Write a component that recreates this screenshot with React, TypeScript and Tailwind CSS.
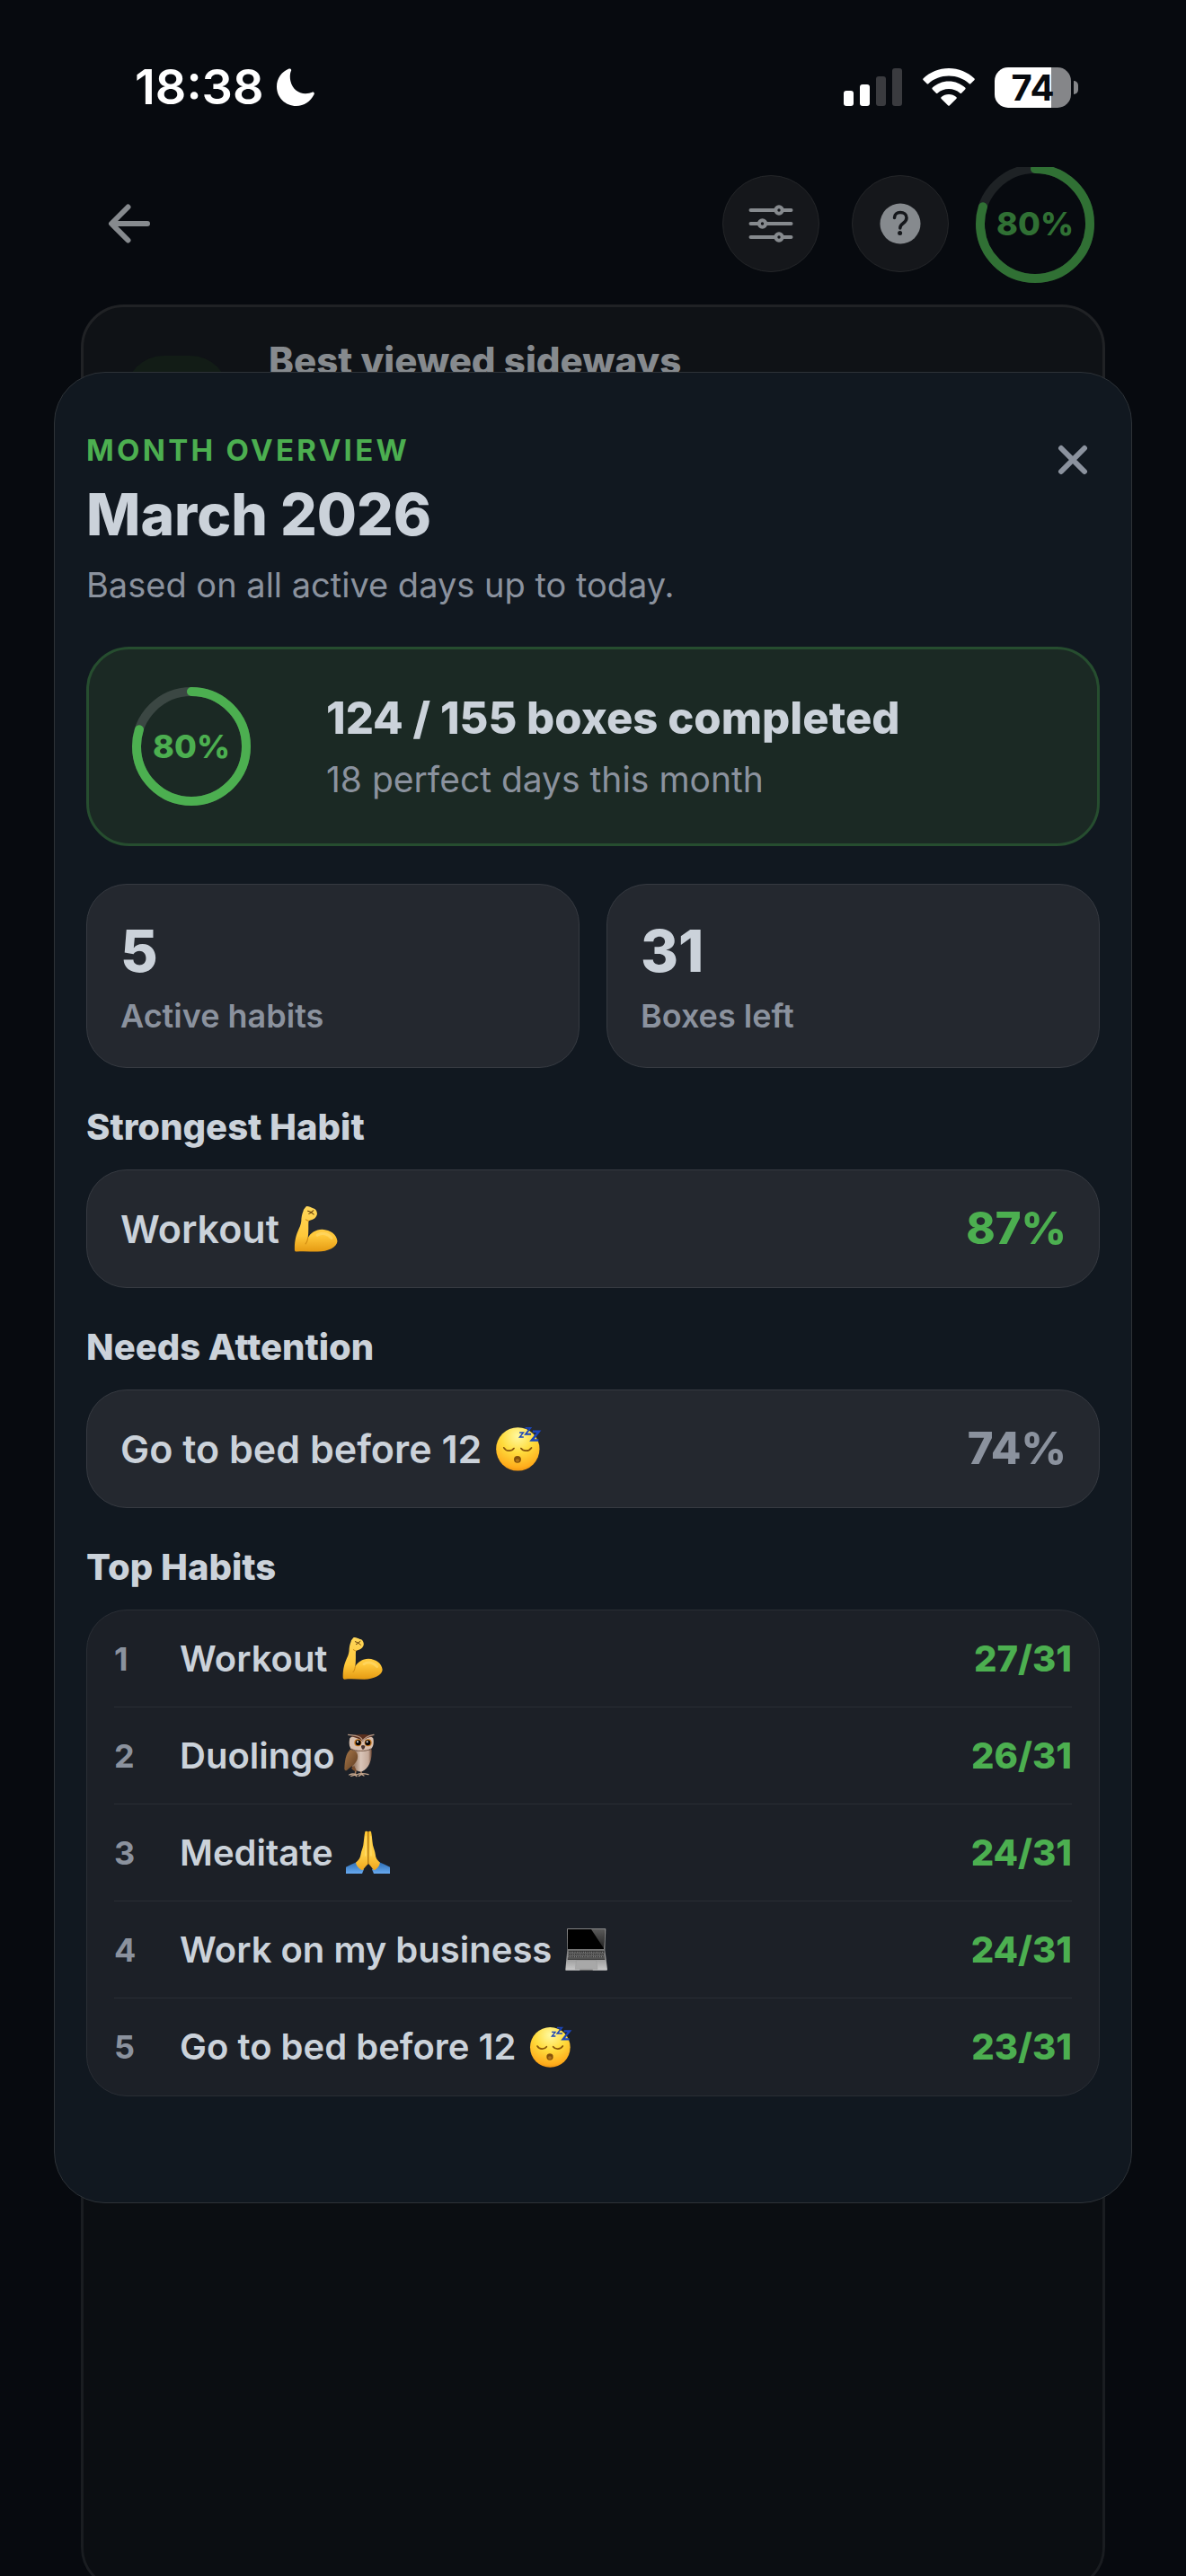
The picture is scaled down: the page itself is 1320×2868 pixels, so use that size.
import type { ReactNode } from "react";

type EmojiName = "arm" | "owl" | "hands" | "laptop" | "sleeping";

const habits: { name: string; emoji: EmojiName; score: string }[] = [
  { name: "Workout", emoji: "arm", score: "27/31" },
  { name: "Duolingo", emoji: "owl", score: "26/31" },
  { name: "Meditate", emoji: "hands", score: "24/31" },
  { name: "Work on my business", emoji: "laptop", score: "24/31" },
  { name: "Go to bed before 12", emoji: "sleeping", score: "23/31" },
];

const stats = [
  { value: "5", label: "Active habits" },
  { value: "31", label: "Boxes left" },
];

const emojiArt: Record<EmojiName, { label: string; art: ReactNode }> = {
  arm: {
    label: "💪",
    art: (
      <>
        <defs>
          <linearGradient id="armSkin" x1="0" y1="0" x2="0" y2="1">
            <stop offset="0" stopColor="#ffd75a" />
            <stop offset="0.65" stopColor="#ffc83a" />
            <stop offset="1" stopColor="#e59a12" />
          </linearGradient>
        </defs>
        <path
          fill="url(#armSkin)"
          d="M43 4C49 1 57 6 65 9C71 9 76 15 77 22C79 29 75 33 73 37C69 43 59 45 51 48C50 63 52 81 49 101C56 85 73 75 93 74C119 75 139 91 140 111C139 129 111 143 79 143C56 143 36 141 13 143C8 142 8 139 8 133C8 108 13 91 21 73C27 61 29 51 29 41C30 28 34 21 36 13Z"
        />
        <path d="M49 101C48 109 46 114 42 119M51 48C49 46 46 47 43 44" fill="none" stroke="#cf8a10" strokeWidth="3" strokeLinecap="round" />
        <path d="M49 17L59 21L66 16M52 26L60 22L67 28" fill="none" stroke="#6b430c" strokeWidth="3" strokeLinecap="round" strokeLinejoin="round" />
        <path d="M78 92C92 82 112 88 122 101" fill="none" stroke="#ffdf7a" strokeWidth="9" strokeLinecap="round" opacity="0.5" />
      </>
    ),
  },
  owl: {
    label: "🦉",
    art: (
      <>
        <defs>
          <linearGradient id="owlBody" x1="0" y1="0" x2="1" y2="0">
            <stop offset="0" stopColor="#6b4529" />
            <stop offset="0.5" stopColor="#d9c5b8" />
            <stop offset="0.85" stopColor="#c5aa9a" />
            <stop offset="1" stopColor="#6a4531" />
          </linearGradient>
          <linearGradient id="owlWing" x1="0" y1="0" x2="1" y2="1">
            <stop offset="0" stopColor="#a9794a" />
            <stop offset="1" stopColor="#5c3a20" />
          </linearGradient>
        </defs>
        <path d="M63 122L61 138M80 122L82 137" stroke="#9b7558" strokeWidth="5" />
        <path d="M41 138C50 134 58 134 66 138C73 134 90 133 105 137M47 142L60 138L66 143M73 142L82 136L90 141" fill="none" stroke="#c3a58c" strokeWidth="4" strokeLinecap="round" />
        <path d="M43 52C55 62 105 61 116 52C119 88 106 118 84 127C64 129 48 114 42 90Z" fill="url(#owlBody)" />
        <path d="M44 55C62 54 72 66 69 82C67 99 50 109 34 122C31 126 25 124 25 118C26 95 29 66 44 55Z" fill="url(#owlWing)" />
        <path d="M48 115C53 124 59 127 66 126L58 108Z" fill="#7a4f2f" />
        <path d="M43 16C54 2 109 2 121 16C124 31 122 46 112 53C98 61 61 61 48 52C40 44 40 29 43 16Z" fill="#d8bfae" />
        <path d="M45 10C60 13 76 17 86 27C93 17 107 12 121 9C103 1 60 1 45 10Z" fill="#5a2f1e" />
        <path d="M38 4C55 7 73 6 81 16L87 25C92 14 105 7 123 4" fill="none" stroke="#b99a86" strokeWidth="4" strokeLinecap="round" />
        <circle cx="70" cy="31" r="12" fill="#c87920" />
        <circle cx="104" cy="31" r="12" fill="#c87920" />
        <circle cx="71" cy="31" r="9" fill="#090706" />
        <circle cx="103" cy="31" r="9" fill="#090706" />
        <circle cx="69" cy="28" r="3" fill="#ffffff" />
        <circle cx="101" cy="28" r="3" fill="#ffffff" />
        <path d="M81 41C84 38 91 38 94 42C94 48 91 52 87 54C83 51 81 47 81 41Z" fill="#493630" />
        <path d="M48 51C61 60 98 61 113 51" fill="none" stroke="#7c5d4a" strokeWidth="3" />
      </>
    ),
  },
  hands: {
    label: "🙏",
    art: (
      <>
        <defs>
          <linearGradient id="handSkin" x1="0" y1="0" x2="0" y2="1">
            <stop offset="0" stopColor="#ffc62f" />
            <stop offset="0.6" stopColor="#ffcf45" />
            <stop offset="1" stopColor="#f0a51b" />
          </linearGradient>
          <linearGradient id="sleeve" x1="0" y1="0" x2="0" y2="1">
            <stop offset="0" stopColor="#2c6db4" />
            <stop offset="1" stopColor="#68aaf0" />
          </linearGradient>
        </defs>
        <path d="M0 122C12 116 24 110 37 105L60 130L54 144H0Z" fill="url(#sleeve)" />
        <path d="M147 122C135 116 123 110 110 105L87 130L93 144H147Z" fill="url(#sleeve)" />
        <path d="M64 4C67 2 71 2 74 5L75 110C69 117 62 123 56 133C46 129 36 121 33 107C42 100 48 92 50 78C51 70 56 61 58 49C60 34 61 18 64 4Z" fill="url(#handSkin)" />
        <path d="M84 4C81 2 77 2 74 5L75 110C81 117 87 123 93 133C103 129 111 121 114 107C105 100 99 92 98 78C97 70 93 61 90 49C88 34 87 18 84 4Z" fill="url(#handSkin)" />
        <path d="M74.500 4V112" stroke="#a56a0d" strokeWidth="3.500" strokeLinecap="round" />
        <path d="M66 20L65 84M83 20L84 84" stroke="#ffe07a" strokeWidth="4" strokeLinecap="round" opacity="0.7" />
      </>
    ),
  },
  laptop: {
    label: "💻",
    art: (
      <>
        <defs>
          <linearGradient id="laptopBase" x1="0" y1="0" x2="0" y2="1">
            <stop offset="0" stopColor="#777777" />
            <stop offset="1" stopColor="#c9c9c9" />
          </linearGradient>
          <linearGradient id="laptopGlare" x1="0" y1="0" x2="0" y2="1">
            <stop offset="0" stopColor="#5a5a5a" />
            <stop offset="1" stopColor="#222222" />
          </linearGradient>
        </defs>
        <path d="M11 3H137Q139 3 139 6L136 74H10L9 6Q9 3 11 3Z" fill="#858585" />
        <path d="M12 6H135L132 72H12Z" fill="#000000" />
        <path d="M90 6H135L132 70Z" fill="url(#laptopGlare)" />
        <path d="M10 73H136L144 140Q144 143 141 143H6Q3 143 4 140Z" fill="url(#laptopBase)" />
        <path d="M14 77H133L136 108H11Z" fill="#3a3a3a" />
        <path d="M14 82H133M13 90H134M12 98H135" stroke="#c8c8c8" strokeWidth="2.500" strokeDasharray="2 5" />
        <path d="M13 86H134M12 94H135M12 102H135" stroke="#9a9a9a" strokeWidth="1.500" />
        <path d="M40 110H107L111 139H37Z" fill="#a8a8a8" stroke="#8c8c8c" />
        <path d="M53 142H94" stroke="#5d5d5d" strokeWidth="3" strokeLinecap="round" />
      </>
    ),
  },
  sleeping: {
    label: "😴",
    art: (
      <>
        <defs>
          <radialGradient id="faceSkin" cx="0.5" cy="0.2" r="0.85">
            <stop offset="0" stopColor="#fff9a0" />
            <stop offset="0.45" stopColor="#ffdc3d" />
            <stop offset="0.85" stopColor="#ffad1c" />
            <stop offset="1" stopColor="#e98a0c" />
          </radialGradient>
        </defs>
        <circle cx="73" cy="73" r="67" fill="url(#faceSkin)" />
        <path d="M30 69C37 81 54 81 61 71M83 71C90 81 107 81 115 69" fill="none" stroke="#8a560c" strokeWidth="5" strokeLinecap="round" />
        <ellipse cx="72" cy="105" rx="11" ry="11" fill="#84510b" />
        <ellipse cx="72" cy="108" rx="6" ry="5" fill="#b0741a" />
        <g fill="none" stroke="#1c45b8" strokeLinejoin="miter">
          <path d="M78 22H90L79 36H91" strokeWidth="4" />
          <path d="M96 8H112L97 27H114" strokeWidth="5" />
          <path d="M119 19H138L116 46H137" strokeWidth="7" />
        </g>
      </>
    ),
  },
};

function Emoji({ name, large }: { name: EmojiName; large?: boolean }) {
  const { label, art } = emojiArt[name];
  return (
    <svg className={large ? "h-[53px] w-[53px] shrink-0" : "h-[49px] w-[49px] shrink-0"} viewBox="0 0 147 147" role="img" aria-label={label}>
      {art}
    </svg>
  );
}

function StatusBar() {
  return (
    <div className="flex h-[66px] items-center justify-between pr-[120px] pl-[150px] text-white">
      <div className="flex items-center gap-[14px]">
        <time className="text-[54px] leading-[66px] font-semibold">18:38</time>
        <svg className="h-[42px] w-[42px]" viewBox="0 0 42 42" fill="currentColor" aria-label="Focus mode on">
          <path d="M13.600.6C15 0 16.800 1 16 2.800C14.600 6 14.500 10 15.300 14C17.300 23 24 28.200 32 28.200C35 28.200 37.500 27.400 39.300 26.700C41.200 26 42.400 27.600 41.500 29.300C37.500 37 30.500 42 21.800 42C9.500 42 0 32.500 0 20.500C0 11.500 5.500 3.800 13.600.6Z" />
        </svg>
      </div>
      <div className="flex items-center">
        <svg className="h-[42px] w-[66px]" viewBox="0 0 66 42" fill="currentColor" aria-label="Signal strength">
          <rect x="0" y="25" width="11" height="17" rx="3" />
          <rect x="18" y="18" width="11" height="24" rx="3" />
          <rect x="36" y="9" width="11" height="33" rx="3" fill="#3a3b3f" />
          <rect x="54" y="0" width="11" height="42" rx="3" fill="#3a3b3f" />
        </svg>
        <svg className="ml-[22px] h-[42px] w-[58px]" viewBox="0 0 58 42" fill="currentColor" aria-label="Wi-Fi">
          <path d="M29 0C40 0 50 4.300 57.300 11.300Q58.300 12.300 57.300 13.300L53.500 17Q52.500 18 51.500 17C45.500 11.500 37.700 8.500 29 8.500C20.300 8.500 12.500 11.500 6.500 17Q5.500 18 4.500 17L.7 13.300Q-.3 12.300.7 11.300C8 4.300 18 0 29 0Z" />
          <path d="M29 14.500C36 14.500 42.400 17.200 47.200 21.600Q48.200 22.600 47.200 23.600L43.300 27.400Q42.300 28.400 41.300 27.400C38 24.500 33.700 22.900 29 22.900C24.300 22.900 20 24.500 16.700 27.400Q15.700 28.400 14.700 27.400L10.800 23.600Q9.800 22.600 10.800 21.600C15.600 17.200 22 14.500 29 14.500Z" />
          <path d="M29 29C32.200 29 35.100 30.200 37.300 32.100Q38.300 33.100 37.300 34.100L30 41.300Q29 42.300 28 41.300L20.700 34.100Q19.700 33.100 20.700 32.100C22.900 30.200 25.800 29 29 29Z" />
        </svg>
        <div className="ml-[22px] flex h-[45px] w-[85px] items-center justify-center rounded-[15px] bg-[linear-gradient(to_right,#ffffff_74%,#858689_74%)]">
          <span className="text-[40px] leading-[45px] font-bold text-[#070a0f]">74</span>
        </div>
        <span className="ml-[3px] h-[15px] w-[5px] rounded-r-full bg-[#858689]" />
      </div>
    </div>
  );
}

function Ring({ stroke, track, clipped }: { stroke: string; track: string; clipped?: boolean }) {
  return (
    <svg
      className={clipped ? "h-[129px] w-[132px]" : "h-[132px] w-[132px]"}
      viewBox={clipped ? "0 3 132 129" : "0 0 132 132"}
      fill="none"
      strokeWidth="10"
      aria-hidden="true"
    >
      <circle cx="66" cy="66" r="61" stroke={track} />
      <circle
        cx="66"
        cy="66"
        r="61"
        stroke={stroke}
        strokeLinecap="round"
        pathLength="100"
        strokeDasharray="80 100"
        transform="rotate(-90 66 66)"
      />
    </svg>
  );
}

function NavBar() {
  return (
    <nav className="mt-14 flex h-[126px] items-center pr-[102px] pl-[120px] text-[#868a8e]">
      <button aria-label="Back" className="mr-auto">
        <svg className="h-12 w-12" viewBox="0 0 48 48" fill="none" stroke="currentColor" strokeWidth="6" strokeLinecap="round" strokeLinejoin="round">
          <path d="M22.500 5.500L4 24L22.500 42.500M5 24H44" />
        </svg>
      </button>
      <button aria-label="Filters" className="flex h-[108px] w-[108px] items-center justify-center rounded-full border border-[#242629] bg-[#15171b]">
        <svg className="h-12 w-[50px]" viewBox="0 0 50 48" fill="none" stroke="currentColor" strokeWidth="4" strokeLinecap="round">
          <path d="M2.500 9H29.500M38.500 9H47.500M2.500 24H11M20 24H47.500M2.500 39H29.500M38.500 39H47.500" />
          <circle cx="34" cy="9" r="3.700" />
          <circle cx="15.500" cy="24" r="3.700" />
          <circle cx="34" cy="39" r="3.700" />
        </svg>
      </button>
      <button aria-label="Help" className="ml-9 flex h-[108px] w-[108px] items-center justify-center rounded-full border border-[#242629] bg-[#15171b]">
        <svg className="h-[46px] w-[46px]" viewBox="0 0 46 46" fill="none">
          <circle cx="23" cy="23" r="22.500" fill="currentColor" />
          <path d="M16.500 16.500C16.500 12.500 19.300 10.500 23 10.500C27 10.500 30 13 30 16.500C30 19.500 28.500 21 26 22.700C23.800 24.200 22.800 25.300 22.800 28" stroke="#15171b" strokeWidth="3.500" strokeLinecap="round" />
          <circle cx="22.600" cy="33.600" r="2.500" fill="#15171b" />
        </svg>
      </button>
      <div className="relative ml-[30px] self-start">
        <Ring stroke="#307034" track="#1e2225" clipped />
        <span className="absolute inset-x-0 top-0 text-center text-[36px] leading-[126px] font-extrabold text-[#307034]">80%</span>
      </div>
    </nav>
  );
}

function Backdrop() {
  return (
    <div className="mt-[27px] flex flex-1 flex-col gap-9 px-[90px]">
      <section className="flex h-[237px] gap-[45px] rounded-[48px] border-[3px] border-[#202225] bg-[#0f1216] px-[47px] pt-[27px] text-[#868a8e]">
        <div className="mt-[27px] h-[114px] w-[114px] shrink-0 rounded-[42px] bg-[#121c16]" />
        <h2 className="text-[42px] leading-[66px] font-extrabold">Best viewed sideways</h2>
      </section>
      <section className="-mb-4 flex-1 rounded-[48px] border-[3px] border-[#1a1d21] bg-[#0b0e12]" />
    </div>
  );
}

function Section({ title, children }: { title: string; children: ReactNode }) {
  return (
    <section className="mt-[42px]">
      <h2 className="mb-[23px] text-[40px] leading-[48px] font-extrabold">{title}</h2>
      {children}
    </section>
  );
}

function HabitCard({ name, emoji, percent, strong }: { name: string; emoji: EmojiName; percent: string; strong?: boolean }) {
  return (
    <div className="flex h-[132px] items-center justify-between rounded-[45px] border border-[#363a41] bg-[#24282f] pr-[36px] pl-[37px]">
      <span className="flex items-center gap-[14px] text-[43px] leading-[54px] font-semibold">
        {name} <Emoji name={emoji} large />
      </span>
      <span className={strong ? "text-[49px] leading-[54px] font-extrabold text-[#4caf50]" : "text-[49px] leading-[54px] font-extrabold text-[#8b929e]"}>
        {percent}
      </span>
    </div>
  );
}

function OverviewSheet() {
  return (
    <div
      role="dialog"
      aria-label="Month overview"
      className="absolute inset-x-[60px] top-[414px] rounded-[57px] border border-[#2d3237] bg-[#111820] px-[35px] pt-[65px] pb-[118px] text-[#cbd2da]"
    >
      <header className="flex items-start justify-between">
        <div>
          <p className="text-[33px] leading-[42px] font-bold tracking-widest text-[#4caf50]">MONTH OVERVIEW</p>
          <h1 className="mt-3 text-[64px] leading-[78px] font-extrabold">March 2026</h1>
          <p className="mt-[15px] text-[38px] leading-[48px] text-[#8b929e]">Based on all active days up to today.</p>
        </div>
        <button aria-label="Close" className="px-[6px] py-3 text-[#8b929e]">
          <svg className="h-[40px] w-[48px]" viewBox="0 0 48 40" fill="none" stroke="currentColor" strokeWidth="6" strokeLinecap="round">
            <path d="M11 7L37 33M37 7L11 33" />
          </svg>
        </button>
      </header>

      <section className="mt-[45px] flex h-[222px] items-center gap-[84px] rounded-[48px] border-[3px] border-[#264d2f] bg-[#1b2924] px-12">
        <div className="relative">
          <Ring stroke="#4caf50" track="#3b4743" />
          <span className="absolute inset-0 text-center text-[36px] leading-[132px] font-extrabold text-[#4caf50]">80%</span>
        </div>
        <div>
          <p className="text-[49px] leading-[60px] font-extrabold">124 / 155 boxes completed</p>
          <p className="mt-[14px] text-[39px] leading-[48px] text-[#8b929e]">18 perfect days this month</p>
        </div>
      </section>

      <section className="mt-[42px] grid grid-cols-2 gap-[30px]">
        {stats.map((stat) => (
          <div key={stat.label} className="rounded-[45px] border border-[#363a41] bg-[#24282f] px-[37px] pt-[35px] pb-[33px]">
            <p className="text-[64px] leading-[78px] font-extrabold">{stat.value}</p>
            <p className="mt-[9px] text-[36px] leading-[48px] font-semibold text-[#8b929e]">{stat.label}</p>
          </div>
        ))}
      </section>

      <Section title="Strongest Habit">
        <HabitCard name="Workout" emoji="arm" percent="87%" strong />
      </Section>

      <Section title="Needs Attention">
        <HabitCard name="Go to bed before 12" emoji="sleeping" percent="74%" />
      </Section>

      <Section title="Top Habits">
        <ol className="rounded-[45px] border border-[#2a2e35] bg-[#1c2027] px-[30px]">
          {habits.map((habit, i) => (
            <li key={habit.name} className="flex h-[108px] items-center border-b border-[#2a2e35] text-[40px] leading-[48px] last:border-b-0">
              <span className="w-[73px] text-[36px] font-bold text-[#8b929e]">{i + 1}</span>
              <span className={habit.emoji === "owl" ? "flex flex-1 items-center gap-[2px] font-semibold" : "flex flex-1 items-center gap-[14px] font-semibold"}>
                {habit.name} <Emoji name={habit.emoji} />
              </span>
              <span className="font-extrabold text-[#4caf50]">{habit.score}</span>
            </li>
          ))}
        </ol>
      </Section>
    </div>
  );
}

export default function App() {
  return (
    <main className="relative flex min-h-screen flex-col overflow-hidden bg-[#070a0f] pt-16 font-['Inter',sans-serif]">
      <StatusBar />
      <NavBar />
      <Backdrop />
      <OverviewSheet />
    </main>
  );
}
